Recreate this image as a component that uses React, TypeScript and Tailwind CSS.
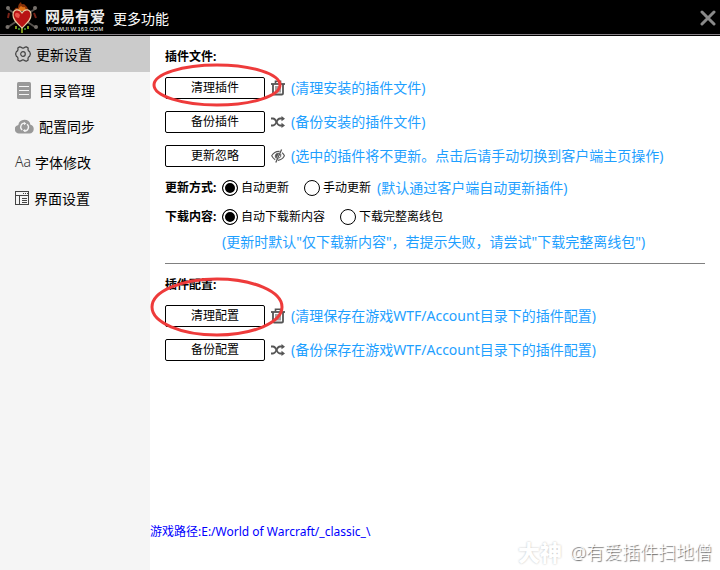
import type { ReactNode } from 'react'

const FONT = "font-['Noto_Sans','Noto_Sans_CJK_SC',sans-serif]"

function HeartLogo() {
  return (
    <svg width="34" height="32" viewBox="0 0 34 32" aria-hidden="true">
      <g stroke="#55504c" strokeWidth="1.8" strokeLinecap="round">
        <path d="M3 7 L30 25 M30 7 L3 25" />
      </g>
      <path d="M4 11 L3 16 M29 11 L31 16" stroke="#7a2318" strokeWidth="2" />
      <g fill="#77716c">
        <circle cx="3" cy="6" r="2" />
        <circle cx="30" cy="6" r="2" />
        <circle cx="2.5" cy="25" r="2" />
        <circle cx="31" cy="25" r="2" />
      </g>
      <path d="M9 9 Q10 5 13 6 Q13 2 16 0 Q16 3 19 2 Q22 4 24 9 Z" fill="#8a3208" />
      <path d="M13 9 Q14 5 16 4 Q18 6 20 5 L21 9 Z" fill="#e07416" />
      <path d="M11 24 V27 M17 26 V31 M23 24 V27" stroke="#7d961c" strokeWidth="2" />
      <path d="M14 26 V28 M20 26 V28" stroke="#2f7a2a" strokeWidth="2" />
      <path
        d="M17 26 C12 21 8 18 8 13 C8 7 14 6 17 11 C20 6 26 7 26 13 C26 18 22 21 17 26 Z"
        fill="#b81414"
        stroke="#e6c9a0"
        strokeWidth="1.2"
      />
      <path d="M10 13 C10 10 13 10 15 13 L14 16 C12 16 10 15 10 13 Z" fill="#e8554c" />
    </svg>
  )
}

function GearIcon() {
  return (
    <svg width="16" height="16" viewBox="0 0 16 16" fill="none" stroke="#444" strokeWidth="1.2" strokeLinejoin="round" aria-hidden="true">
      <path d="M4.6 0.8 L6 1.2 Q8 3.2 10 1.2 L11.4 0.8 L13.2 2 Q12.4 5 14.6 5.6 L15.4 8 L14.6 10.4 Q12.4 11 13.2 14 L11.4 15.2 L10 14.8 Q8 12.8 6 14.8 L4.6 15.2 L2.8 14 Q3.6 11 1.4 10.4 L0.6 8 L1.4 5.6 Q3.6 5 2.8 2 Z" />
      <circle cx="8" cy="8" r="2.3" />
    </svg>
  )
}

function ListIcon() {
  return (
    <svg width="16" height="17" viewBox="0 0 16 17" aria-hidden="true">
      <rect x="2" width="14" height="17" rx="1.5" fill="#999" />
      <path d="M4 4.5 H14 M4 8.5 H14 M4 12.5 H14" stroke="#f5f5f5" strokeWidth="1.2" />
    </svg>
  )
}

function CloudIcon() {
  return (
    <svg width="19" height="15" viewBox="0 0 19 15" aria-hidden="true">
      <path d="M4.5 14.5 A4.3 4.3 0 0 1 3.3 6 A6.2 6.2 0 0 1 15.5 5.7 A4.5 4.5 0 0 1 14.5 14.5 Z" fill="#999" />
      <path d="M9.8 4.2 A3.8 3.8 0 0 0 7.2 11 M9.4 12 A3.8 3.8 0 0 0 12 5.2" fill="none" stroke="#f5f5f5" strokeWidth="1.3" />
      <path d="M8.9 3 L11.4 4.6 L9 6.2 Z M10.2 10 L7.8 11.6 L10.3 13.2 Z" fill="#f5f5f5" />
    </svg>
  )
}

function WindowIcon() {
  return (
    <svg width="14" height="14" viewBox="0 0 14 14" fill="none" stroke="#444" aria-hidden="true">
      <rect x="0.5" y="0.5" width="13" height="13" />
      <path d="M0 4.5 H14 M4.5 4.5 V14 M7 7.5 H12 M7 9.5 H12 M7 11.5 H12" />
      <path d="M8 2.5 H9 M10 2.5 H11 M12 2.5 H13" />
    </svg>
  )
}

function TrashIcon() {
  return (
    <svg width="14" height="16" viewBox="0 0 14 16" fill="none" stroke="#555" aria-hidden="true">
      <path d="M0 4 H14" strokeWidth="1.8" />
      <path d="M4.5 3.5 V1.2 H9.5 V3.5" strokeWidth="1.6" />
      <path d="M2 4 V13.5 Q2 14.5 3.2 14.5 H10.8 Q12 14.5 12 13.5 V4" strokeWidth="1.8" />
      <path d="M5 6 V12.5 M7 6 V12.5 M9 6 V12.5" strokeWidth="1.1" />
    </svg>
  )
}

function ShuffleIcon() {
  return (
    <svg width="14" height="12" viewBox="0 0 14 12" fill="none" stroke="#555" strokeWidth="1.8" aria-hidden="true">
      <path d="M0 2.5 H2 C6 2.5 5 9.5 9 9.5 H11" />
      <path d="M0 9.5 H2 C6 9.5 5 2.5 9 2.5 H11" />
      <path d="M10.5 0 L14 2.7 L10.5 5.2 Z M10.5 6.8 L14 9.5 L10.5 12 Z" fill="#555" stroke="none" />
    </svg>
  )
}

function EyeOffIcon() {
  return (
    <svg width="14" height="14" viewBox="0 0 14 14" fill="none" stroke="#555" aria-hidden="true">
      <path d="M8.6 2.4 Q3.5 2 0.7 6.8 Q2 9.4 4.2 10.8 M11 3.6 Q12.7 5 13.4 6.8 Q11.4 10.8 7 11.4" strokeWidth="1.1" />
      <path d="M7.8 4 Q4.4 4 4.1 7 Q4.2 8.6 5.2 9.4 Z" fill="#555" strokeWidth="0.6" />
      <path d="M10.6 0.4 L4.8 13.6" strokeWidth="1.3" />
      <path d="M9.8 5 Q10.4 8 7.8 9.5" strokeWidth="1" />
    </svg>
  )
}

const MENU: { label: string; icon: ReactNode; gap: string }[] = [
  { label: '更新设置', icon: <GearIcon />, gap: 'gap-[5px]' },
  { label: '目录管理', icon: <ListIcon />, gap: 'gap-2' },
  { label: '配置同步', icon: <CloudIcon />, gap: 'gap-[5px]' },
  { label: '字体修改', icon: <span className="font-light text-[#333]">Aa</span>, gap: 'gap-1' },
  { label: '界面设置', icon: <WindowIcon />, gap: 'gap-[5px]' },
]

function ActionRow({ label, icon, hint, mark }: { label: string; icon: ReactNode; hint: string; mark?: ReactNode }) {
  return (
    <div className="relative flex items-center">
      <button type="button" className="h-[22px] w-[100px] rounded-xs border border-black bg-white text-xs">
        {label}
      </button>
      <span className="ml-1.5 flex w-5 items-center">{icon}</span>
      <span className="text-sm/[22px] text-[#1e9fff]">{hint}</span>
      {mark}
    </div>
  )
}

function Radio({ name, label, checked }: { name: string; label: string; checked?: boolean }) {
  return (
    <label className="flex items-center gap-[3px]">
      <input
        type="radio"
        name={name}
        defaultChecked={checked}
        className="size-4 appearance-none rounded-full border border-black bg-white checked:bg-black checked:shadow-[inset_0_0_0_2px_white]"
      />
      {label}
    </label>
  )
}

export default function App() {
  return (
    <div className={`flex min-h-screen flex-col bg-white text-black ${FONT}`}>
      <header className="flex h-9 items-center border-b border-black bg-black pr-1 pl-[5px] text-white shadow-[inset_0_-1px_0_#857f85]">
        <HeartLogo />
        <div className="ml-1.5 flex flex-col items-center pt-1">
          <span className="text-[15px]/[18px] font-bold text-[#eee]">网易有爱</span>
          <span className="font-['Liberation_Sans'] text-[6px]/[8px]">WOWUI.W.163.COM</span>
        </div>
        <h1 className="ml-2 pt-0.5 text-sm">更多功能</h1>
        <button type="button" aria-label="关闭" className="ml-auto">
          <svg width="16" height="16" viewBox="0 0 16 16" stroke="#8a8a8a" strokeWidth="3" strokeLinecap="round">
            <path d="M2 2 L14 14 M14 2 L2 14" />
          </svg>
        </button>
      </header>

      <div className="flex grow">
        <nav className="w-[150px] shrink-0 bg-[#f5f5f5]">
          {MENU.map((item, i) => (
            <button
              key={item.label}
              type="button"
              className={`flex h-9 w-full items-center pl-[15px] text-sm ${item.gap} ${i === 0 ? 'bg-[#cbcbcb]' : ''}`}
            >
              {item.icon}
              <span className="pt-0.5">{item.label}</span>
            </button>
          ))}
        </nav>

        <main className="flex min-w-0 grow flex-col justify-between">
          <div className="px-[15px] pt-3 text-xs">
            <h2 className="leading-[18px] font-bold">插件文件:</h2>
            <div className="mt-[11px] flex flex-col gap-3">
              <ActionRow
                label="清理插件"
                icon={<TrashIcon />}
                hint="(清理安装的插件文件)"
                mark={
                  <svg className="pointer-events-none absolute -top-4 -left-3.5" width="132" height="48" fill="none" stroke="#ee3b3b" strokeWidth="3" aria-hidden="true">
                    <ellipse cx="66" cy="24" rx="63" ry="20" />
                  </svg>
                }
              />
              <ActionRow label="备份插件" icon={<ShuffleIcon />} hint="(备份安装的插件文件)" />
              <ActionRow label="更新忽略" icon={<EyeOffIcon />} hint="(选中的插件将不更新。点击后请手动切换到客户端主页操作)" />
            </div>

            <div className="mt-2.5 flex h-[22px] items-center">
              <span className="w-[57px] font-bold">更新方式:</span>
              <Radio name="mode" label="自动更新" checked />
              <span className="w-[15px]" />
              <Radio name="mode" label="手动更新" />
              <span className="ml-1.5 text-sm text-[#1e9fff]">(默认通过客户端自动更新插件)</span>
            </div>
            <div className="mt-[7px] flex h-[22px] items-center">
              <span className="w-[57px] font-bold">下载内容:</span>
              <Radio name="content" label="自动下载新内容" checked />
              <span className="w-[15px]" />
              <Radio name="content" label="下载完整离线包" />
            </div>
            <p className="mt-[3px] ml-[57px] text-sm/[22px] text-[#1e9fff]">(更新时默认"仅下载新内容"，若提示失败，请尝试"下载完整离线包")</p>

            <hr className="mt-2.5 border-[#808080]" />

            <h2 className="mt-3 leading-[18px] font-bold">插件配置:</h2>
            <div className="mt-[11px] flex flex-col gap-3">
              <ActionRow
                label="清理配置"
                icon={<TrashIcon />}
                hint="(清理保存在游戏WTF/Account目录下的插件配置)"
                mark={
                  <svg className="pointer-events-none absolute -top-7 -left-4" width="138" height="62" fill="none" stroke="#ee3b3b" strokeWidth="3" aria-hidden="true">
                    <ellipse cx="68" cy="30" rx="65" ry="28" />
                  </svg>
                }
              />
              <ActionRow label="备份配置" icon={<ShuffleIcon />} hint="(备份保存在游戏WTF/Account目录下的插件配置)" />
            </div>
          </div>

          <footer className="flex items-start justify-between">
            <span className="text-xs text-[#0000ff]">游戏路径:E:/World of Warcraft/_classic_\</span>
            <span className="mt-3.5 mr-2 mb-1 flex items-center gap-2 text-lg/7 font-light text-white text-shadow-[1px_1px_1px_#666]">
              <b className="text-[22px]/7 font-black text-shadow-[0_0_2px_#bbb]">大神</b>
              @有爱插件扫地僧
            </span>
          </footer>
        </main>
      </div>
    </div>
  )
}
